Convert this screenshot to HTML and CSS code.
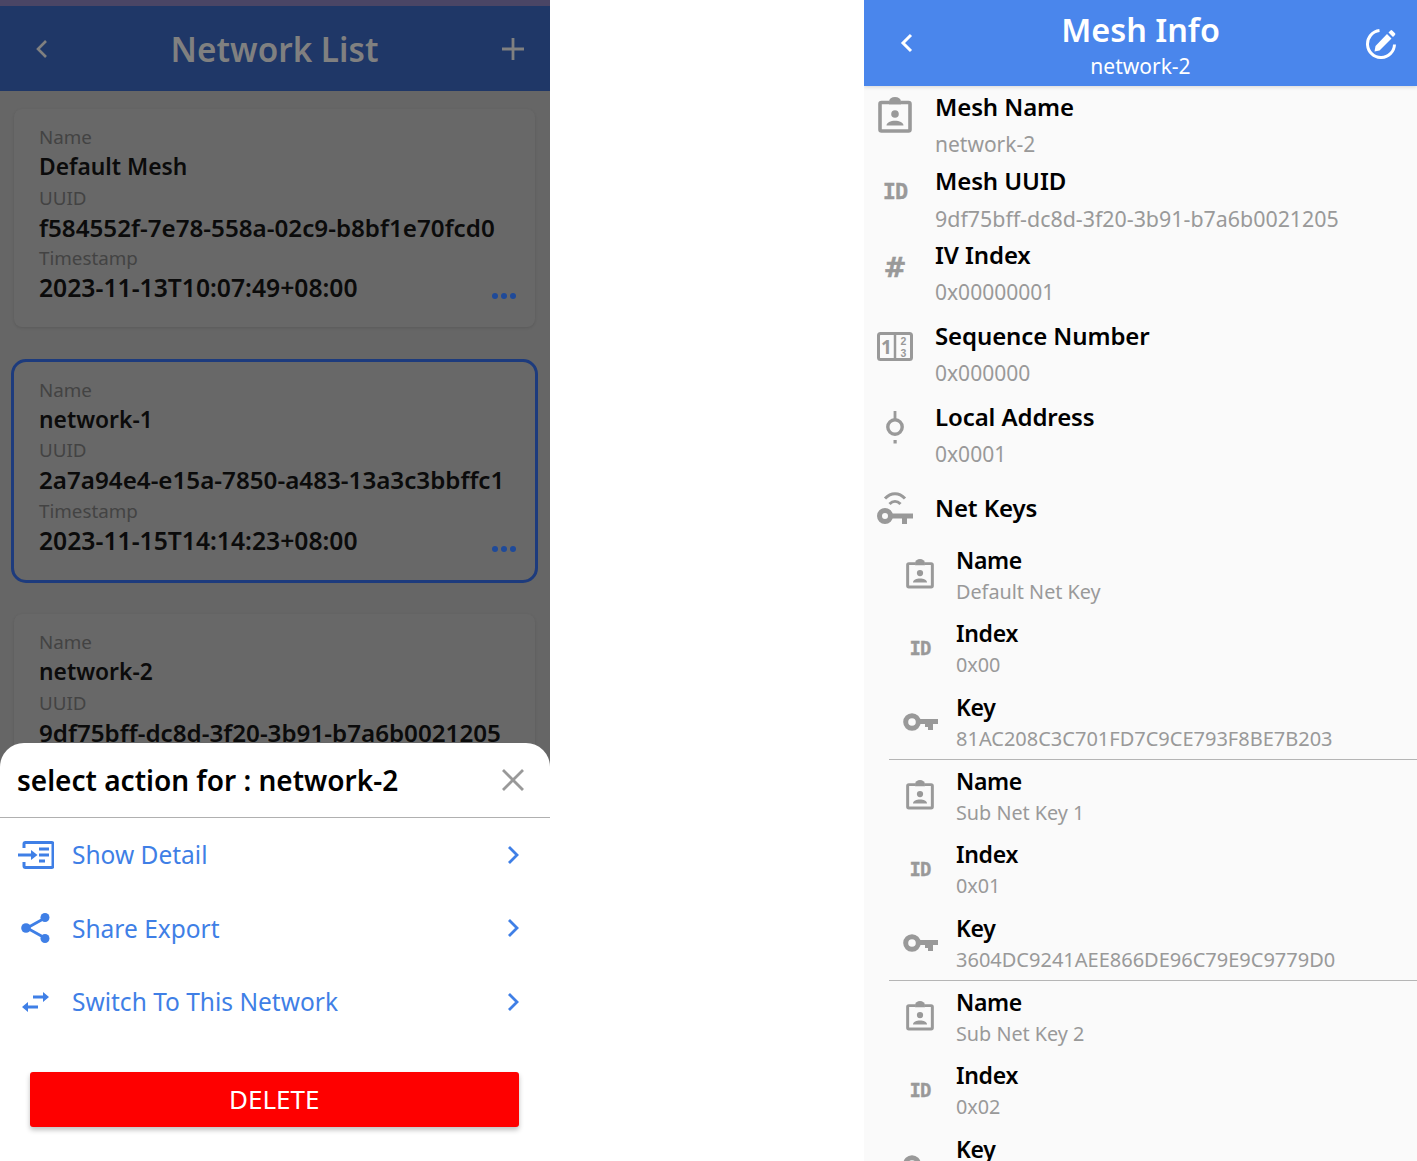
FILE: index.html
```html
<!DOCTYPE html>
<html lang="en">
<head>
    <meta charset="UTF-8">
    <meta name="viewport" content="width=device-width, initial-scale=1.0">
    <title>Network List and Mesh Info</title>
    <link rel="stylesheet" href="styles.css">
</head>
<body>
    <svg class="sprite" xmlns="http://www.w3.org/2000/svg">
        <symbol id="i-badge" viewBox="0 0 34 37">
            <path d="M11 6.500H3.500a1.500 1.500 0 0 0-1.500 1.500V33.500a1.500 1.500 0 0 0 1.500 1.500h27a1.500 1.500 0 0 0 1.500-1.500V8a1.500 1.500 0 0 0-1.500-1.500H23" fill="none" stroke="currentColor" stroke-width="3.600"/>
            <path d="M11 8.500V5.500a6 4.500 0 0 1 12 0V8.500z" fill="currentColor"/>
            <circle cx="17" cy="18" r="3.800" fill="currentColor"/>
            <path d="M8.500 29.500c0-6.500 17-6.500 17 0z" fill="currentColor"/>
        </symbol>
        <symbol id="i-key" viewBox="0 0 35 18">
            <circle cx="9" cy="9" r="6.300" fill="none" stroke="currentColor" stroke-width="5"/>
            <path d="M14 6H35V11H30V17H25V14H22V11H14z" fill="currentColor"/>
        </symbol>
        <symbol id="i-wifikey" viewBox="0 0 36 34">
            <path d="M8 7.500C14 1 22 1 28 7.500" fill="none" stroke="currentColor" stroke-width="3"/>
            <path d="M12.500 13C16 9.500 20 9.500 23.500 13" fill="none" stroke="currentColor" stroke-width="3"/>
            <circle cx="8" cy="25" r="5.500" fill="none" stroke="currentColor" stroke-width="5"/>
            <path d="M12 22.500H36V27.500H30V33H25V27.500H12z" fill="currentColor"/>
        </symbol>
    </svg>

    <div class="page">
        <!-- left phone: network list with the action sheet open -->
        <section class="phone phone-left">
            <div class="status-strip"></div>
            <header class="list-header">
                <svg class="back-icon" viewBox="0 0 14 22"><path d="M11 3L3 11l8 8" fill="none" stroke="currentColor" stroke-width="2.600"/></svg>
                <h1 class="list-title">Network List</h1>
                <svg class="plus-icon" viewBox="0 0 22 22"><path d="M11 0V22M0 11H22" stroke="currentColor" stroke-width="2.800"/></svg>
            </header>

            <div class="network-list">
                <div class="network-card">
                    <div class="card-label">Name</div>
                    <div class="card-value">Default Mesh</div>
                    <div class="card-label">UUID</div>
                    <div class="card-value code">f584552f-7e78-558a-02c9-b8bf1e70fcd0</div>
                    <div class="card-label">Timestamp</div>
                    <div class="card-value stamp">2023-11-13T10:07:49+08:00</div>
                    <div class="card-more"><i></i><i></i><i></i></div>
                </div>
                <div class="network-card selected">
                    <div class="card-label">Name</div>
                    <div class="card-value">network-1</div>
                    <div class="card-label">UUID</div>
                    <div class="card-value code">2a7a94e4-e15a-7850-a483-13a3c3bbffc1</div>
                    <div class="card-label">Timestamp</div>
                    <div class="card-value stamp">2023-11-15T14:14:23+08:00</div>
                    <div class="card-more"><i></i><i></i><i></i></div>
                </div>
                <div class="network-card">
                    <div class="card-label">Name</div>
                    <div class="card-value">network-2</div>
                    <div class="card-label">UUID</div>
                    <div class="card-value code">9df75bff-dc8d-3f20-3b91-b7a6b0021205</div>
                </div>
            </div>

            <div class="action-sheet">
                <div class="sheet-head">
                    <div class="sheet-title">select action for : network-2</div>
                    <svg class="close-icon" viewBox="0 0 22 22"><path d="M1 1L21 21M21 1L1 21" stroke="currentColor" stroke-width="2.800"/></svg>
                </div>
                <div class="sheet-item">
                    <svg class="sheet-icon" viewBox="0 0 36 32"><path d="M6 9V5a1.500 1.500 0 0 1 1.500-1.500h26a1.500 1.500 0 0 1 1.500 1.500v22a1.500 1.500 0 0 1-1.500 1.500h-26a1.500 1.500 0 0 1-1.500-1.500v-4" fill="none" stroke="currentColor" stroke-width="3"/><path d="M0 16H15" fill="none" stroke="currentColor" stroke-width="3"/><path d="M13 11l6.500 5-6.500 5z" fill="currentColor"/><path d="M21 10H31M21 16H31M21 22H27" fill="none" stroke="currentColor" stroke-width="3"/></svg>
                    <span class="sheet-label">Show Detail</span>
                    <svg class="chevron" viewBox="0 0 12 20"><path d="M2 2l8 8-8 8" fill="none" stroke="currentColor" stroke-width="2.800"/></svg>
                </div>
                <div class="sheet-item">
                    <svg class="sheet-icon" viewBox="0 0 36 32"><path d="M27 6L9 16l18 10" fill="none" stroke="currentColor" stroke-width="2.800"/><circle cx="27" cy="5.500" r="4.500" fill="currentColor"/><circle cx="8" cy="16" r="4.800" fill="currentColor"/><circle cx="27" cy="26.500" r="4.500" fill="currentColor"/></svg>
                    <span class="sheet-label">Share Export</span>
                    <svg class="chevron" viewBox="0 0 12 20"><path d="M2 2l8 8-8 8" fill="none" stroke="currentColor" stroke-width="2.800"/></svg>
                </div>
                <div class="sheet-item">
                    <svg class="sheet-icon" viewBox="0 0 36 32"><path d="M15 9.500H25V6L31 11 25 16V12.500H15zM4 21L10 16V19.500H20V22.500H10V26z" fill="currentColor"/></svg>
                    <span class="sheet-label">Switch To This Network</span>
                    <svg class="chevron" viewBox="0 0 12 20"><path d="M2 2l8 8-8 8" fill="none" stroke="currentColor" stroke-width="2.800"/></svg>
                </div>
                <button class="delete-button">DELETE</button>
            </div>
        </section>

        <!-- right phone: mesh info -->
        <section class="phone phone-right">
            <header class="info-header">
                <svg class="info-back" viewBox="0 0 14 22"><path d="M11 3L3 11l8 8" fill="none" stroke="currentColor" stroke-width="3"/></svg>
                <div class="info-heading">
                    <h1 class="info-title">Mesh Info</h1>
                    <div class="info-subtitle">network-2</div>
                </div>
                <svg class="info-edit" viewBox="0 0 32 32"><path d="M14.500 3.600A13.500 13.500 0 1 0 29.500 17.500" fill="none" stroke="currentColor" stroke-width="3"/><path d="M10.500 19L22 7l4.500 4.500L14.500 23.500 9.500 24.500zM23.500 5.500l2-2a1.200 1.200 0 0 1 1.700 0l2.800 2.800a1.200 1.200 0 0 1 0 1.700l-2 2z" fill="currentColor"/></svg>
            </header>

            <div class="info-list">
                <div class="info-row">
                    <div class="row-icon"><svg class="icon-badge"><use href="#i-badge"/></svg></div>
                    <div class="row-text"><div class="row-title">Mesh Name</div><div class="row-value">network-2</div></div>
                </div>
                <div class="info-row">
                    <div class="row-icon"><span class="icon-id">ID</span></div>
                    <div class="row-text"><div class="row-title">Mesh UUID</div><div class="row-value code">9df75bff-dc8d-3f20-3b91-b7a6b0021205</div></div>
                </div>
                <div class="info-row">
                    <div class="row-icon"><span class="icon-hash">#</span></div>
                    <div class="row-text"><div class="row-title">IV Index</div><div class="row-value">0x00000001</div></div>
                </div>
                <div class="info-row spaced">
                    <div class="row-icon">
                        <svg class="icon-seq" viewBox="0 0 36 29">
                            <rect x="1.500" y="1.500" width="33" height="26" rx="2" fill="none" stroke="currentColor" stroke-width="3"/>
                            <path d="M18 2V27" stroke="currentColor" stroke-width="2.500"/>
                            <text class="seq-one" x="9.500" y="21.500" text-anchor="middle">1</text>
                            <text class="seq-two" x="26.500" y="12.500" text-anchor="middle">2</text>
                            <text class="seq-two" x="26.500" y="25" text-anchor="middle">3</text>
                        </svg>
                    </div>
                    <div class="row-text"><div class="row-title">Sequence Number</div><div class="row-value">0x000000</div></div>
                </div>
                <div class="info-row spaced">
                    <div class="row-icon">
                        <svg class="icon-addr" viewBox="0 0 20 34">
                            <path d="M10 0V8" stroke="currentColor" stroke-width="2.800"/>
                            <circle cx="10" cy="16" r="7.200" fill="none" stroke="currentColor" stroke-width="3.400"/>
                            <rect x="8.500" y="29" width="3.200" height="3.500" fill="currentColor"/>
                        </svg>
                    </div>
                    <div class="row-text"><div class="row-title">Local Address</div><div class="row-value">0x0001</div></div>
                </div>

                <div class="keys-head">
                    <div class="row-icon"><svg class="icon-wifikey"><use href="#i-wifikey"/></svg></div>
                    <div class="row-title">Net Keys</div>
                </div>

                <div class="key-group">
                    <div class="key-row"><div class="key-icon"><svg class="icon-badge small"><use href="#i-badge"/></svg></div><div><div class="key-title">Name</div><div class="key-value">Default Net Key</div></div></div>
                    <div class="key-row"><div class="key-icon"><span class="icon-id small">ID</span></div><div><div class="key-title">Index</div><div class="key-value">0x00</div></div></div>
                    <div class="key-row last"><div class="key-icon"><svg class="icon-key"><use href="#i-key"/></svg></div><div><div class="key-title">Key</div><div class="key-value code">81AC208C3C701FD7C9CE793F8BE7B203</div></div></div>
                </div>
                <div class="key-group">
                    <div class="key-row"><div class="key-icon"><svg class="icon-badge small"><use href="#i-badge"/></svg></div><div><div class="key-title">Name</div><div class="key-value">Sub Net Key 1</div></div></div>
                    <div class="key-row"><div class="key-icon"><span class="icon-id small">ID</span></div><div><div class="key-title">Index</div><div class="key-value">0x01</div></div></div>
                    <div class="key-row last"><div class="key-icon"><svg class="icon-key"><use href="#i-key"/></svg></div><div><div class="key-title">Key</div><div class="key-value code">3604DC9241AEE866DE96C79E9C9779D0</div></div></div>
                </div>
                <div class="key-group">
                    <div class="key-row"><div class="key-icon"><svg class="icon-badge small"><use href="#i-badge"/></svg></div><div><div class="key-title">Name</div><div class="key-value">Sub Net Key 2</div></div></div>
                    <div class="key-row"><div class="key-icon"><span class="icon-id small">ID</span></div><div><div class="key-title">Index</div><div class="key-value">0x02</div></div></div>
                    <div class="key-row last"><div class="key-icon"><svg class="icon-key"><use href="#i-key"/></svg></div><div><div class="key-title">Key</div></div></div>
                </div>
            </div>
        </section>
    </div>
</body>
</html>
```

FILE: styles.css
```css
* {
    box-sizing: border-box;
}

body {
    font-family: "Noto Sans", Arial, sans-serif;
    margin: 0;
    padding: 0;
    background-color: #fff;
    overflow: hidden;
}

.sprite {
    display: none;
}

.page {
    display: flex;
    justify-content: space-between;
    width: 1417px;
    height: 1161px;
    overflow: hidden;
}

.phone {
    height: 1161px;
    overflow: hidden;
}

/* left phone */
.phone-left {
    position: relative;
    width: 550px;
    background-color: #666;
}

.status-strip {
    height: 6px;
    background-color: #4a4565;
}

.list-header {
    display: flex;
    align-items: center;
    justify-content: space-between;
    height: 85px;
    padding: 0 26px 0 35px;
    background-color: #1f3767;
    color: #808080;
}

.back-icon {
    width: 14px;
    height: 22px;
}

.plus-icon {
    width: 22px;
    height: 22px;
}

.list-title {
    margin: 2px 2px 0 0;
    font-size: 33.300px;
    line-height: 83px;
    font-weight: 600;
    color: #808080;
}

.network-list {
    display: flex;
    flex-direction: column;
    gap: 34.500px;
    padding: 18px 15px 0 14px;
}

.network-card {
    position: relative;
    flex-shrink: 0;
    height: 218px;
    padding: 13px 25px 0;
    background-color: #686868;
    border-radius: 8px;
    box-shadow: 0 1px 3px rgba(0, 0, 0, 0.12);
}

.network-card.selected {
    outline: 3px solid #1d3b7d;
    outline-offset: 0;
    border-radius: 12px;
}

.card-label {
    font-size: 18.800px;
    line-height: 30.300px;
    color: #434343;
}

.card-value {
    font-size: 22.800px;
    line-height: 30.200px;
    font-weight: 600;
    color: #0b0b0b;
    white-space: nowrap;
}

.card-value.code {
    font-size: 24.200px;
}

.card-value.stamp {
    font-size: 24.700px;
}

.card-more {
    position: absolute;
    right: 19px;
    bottom: 28px;
    display: flex;
    gap: 3px;
}

.card-more i {
    width: 6px;
    height: 6px;
    border-radius: 50%;
    background-color: #1f4a99;
}

/* action sheet sits over the list */
.action-sheet {
    position: absolute;
    left: 0;
    right: 0;
    top: 743px;
    bottom: 0;
    background-color: #fff;
    border-radius: 24px 24px 0 0;
}

.sheet-head {
    display: flex;
    align-items: center;
    justify-content: space-between;
    height: 75px;
    padding: 0 26px 0 17px;
    border-bottom: 1.500px solid #b0b0b0;
}

.sheet-title {
    font-size: 28px;
    font-weight: 600;
    color: #000;
}

.close-icon {
    width: 22px;
    height: 22px;
    color: #999;
}

.sheet-item {
    display: flex;
    align-items: center;
    height: 73.500px;
    padding: 0 31px 0 18px;
    color: #3f7fe6;
}

.sheet-icon {
    width: 36px;
    height: 32px;
    flex-shrink: 0;
}

.sheet-label {
    flex: 1;
    margin-left: 18px;
    font-size: 24.500px;
}

.chevron {
    width: 12px;
    height: 20px;
}

.delete-button {
    display: block;
    width: 489.500px;
    height: 55px;
    margin: 33px 0 0 29.500px;
    padding: 0;
    border: none;
    border-radius: 3px;
    background-color: #fe0000;
    box-shadow: 0 3px 5px rgba(0, 0, 0, 0.25);
    font-family: inherit;
    font-size: 26px;
    color: #fff;
}

/* right phone */
.phone-right {
    width: 553px;
    background-color: #fafafa;
}

.info-header {
    display: flex;
    align-items: center;
    justify-content: space-between;
    height: 86px;
    padding: 0 20px 0 36px;
    background-color: #4a86ec;
    color: #fff;
    box-shadow: 0 1px 4px rgba(0, 0, 0, 0.15);
}

.info-back {
    width: 14px;
    height: 22px;
}

.info-edit {
    width: 32px;
    height: 32px;
}

.info-heading {
    margin-left: 2px;
    text-align: center;
}

.info-title {
    margin: 0;
    font-size: 32.400px;
    line-height: 46px;
    font-weight: 600;
}

.info-subtitle {
    font-size: 21px;
    line-height: 28px;
}

.info-list {
    padding-top: 1.500px;
}

.info-row {
    display: flex;
    height: 74px;
}

.info-row.spaced {
    margin-top: 7px;
}

.row-icon {
    display: flex;
    align-items: center;
    justify-content: center;
    width: 62px;
    height: 55px;
    flex-shrink: 0;
    color: #999;
}

.row-text {
    padding-left: 9px;
}

.row-title {
    font-size: 24px;
    line-height: 37px;
    font-weight: 600;
    letter-spacing: -0.100px;
    color: #000;
}

.row-value {
    padding-top: 1px;
    font-size: 21px;
    line-height: 37px;
    color: #999;
    white-space: nowrap;
}

.row-value.code {
    font-size: 21.400px;
}

.icon-badge {
    width: 34px;
    height: 37px;
    margin-bottom: 2px;
}

.icon-badge.small {
    width: 28px;
    height: 31px;
}

.icon-id {
    margin-top: 4px;
    font-family: "DejaVu Sans Mono", monospace;
    font-size: 22px;
    font-weight: 700;
    letter-spacing: -1px;
    color: #999;
    -webkit-text-stroke: 0.3px #999;
}

.icon-id.small {
    margin-top: 0;
    font-size: 19px;
}

.icon-hash {
    margin-top: 8px;
    font-family: "DejaVu Sans", sans-serif;
    font-size: 27px;
    font-weight: 700;
    color: #999;
    -webkit-text-stroke: 0.6px #999;
}

.icon-seq {
    width: 36px;
    height: 29px;
    margin-top: 4px;
}

.seq-one {
    font-size: 19px;
    font-weight: 700;
    fill: #999;
}

.seq-two {
    font-family: "Liberation Sans", Arial, sans-serif;
    font-size: 10.500px;
    font-weight: 700;
    fill: #999;
}

.icon-addr {
    width: 20px;
    height: 34px;
    margin-top: 6px;
}

.icon-wifikey {
    width: 36px;
    height: 34px;
}

.icon-key {
    width: 35px;
    height: 18px;
}

.keys-head {
    display: flex;
    align-items: center;
    height: 62px;
    margin-top: 5px;
}

.keys-head .row-title {
    padding-left: 9px;
}

.key-group {
    height: 216px;
    margin: 5px 0 0 25px;
    border-bottom: 1.500px solid #b5b5b5;
}

.key-row {
    display: flex;
    height: 73.500px;
}

.key-row.last {
    height: 64px;
}

.key-icon {
    display: flex;
    align-items: center;
    justify-content: center;
    width: 62px;
    height: 62px;
    flex-shrink: 0;
    color: #999;
}

.key-icon + div {
    padding-left: 5px;
}

.key-title {
    font-size: 23px;
    line-height: 32px;
    font-weight: 600;
    letter-spacing: -0.300px;
    color: #000;
}

.key-value {
    font-size: 19.800px;
    line-height: 32px;
    color: #999;
    white-space: nowrap;
}

.key-value.code {
    font-size: 20px;
}
```
